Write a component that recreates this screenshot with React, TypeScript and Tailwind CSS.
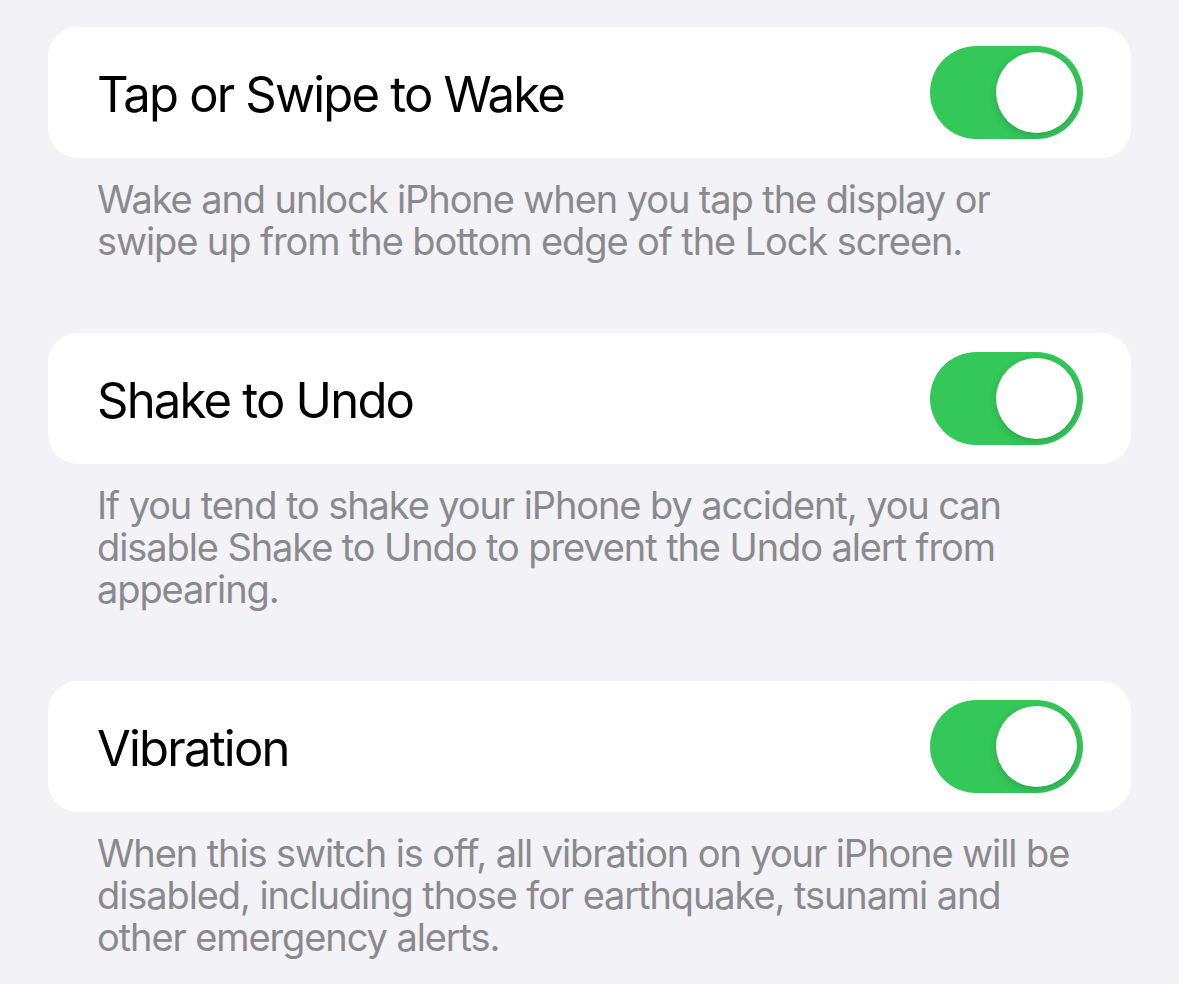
import React from 'react'

const settings = [
  {
    title: 'Tap or Swipe to Wake',
    note: 'Wake and unlock iPhone when you tap the display or swipe up from the bottom edge of the Lock screen.',
  },
  {
    title: 'Shake to Undo',
    note: 'If you tend to shake your iPhone by accident, you can disable Shake to Undo to prevent the Undo alert from appearing.',
  },
  {
    title: 'Vibration',
    note: 'When this switch is off, all vibration on your iPhone will be disabled, including those for earthquake, tsunami and other emergency alerts.',
  },
]

function Toggle() {
  return (
    <div className="w-[153px] h-[93px] rounded-full bg-[#34c759] flex items-center justify-end pr-[6px] shrink-0">
      <div className="w-[81px] h-[81px] rounded-full bg-white shadow-[0_3px_8px_rgba(0,0,0,0.15),0_1px_1px_rgba(0,0,0,0.06)]"></div>
    </div>
  )
}

export default function App() {
  return (
    <div className="min-h-screen bg-[#f2f2f7] pt-[27px] px-[48px] font-['Inter','Liberation_Sans',sans-serif]">
      {settings.map((s, i) => (
        <div key={s.title} className={i > 0 ? 'mt-[71px]' : ''}>
          <div className="h-[131px] bg-white rounded-[30px] flex items-center justify-between pl-[49px] pr-[48px]">
            <span className="pt-[5px] text-[49px] text-black tracking-[-1.8px]">{s.title}</span>
            <Toggle />
          </div>
          <p className="pt-[20px] pl-[49px] pr-[46px] text-[38px] leading-[42px] text-[#8a8a8e] tracking-[-1.1px]">
            {s.note}
          </p>
        </div>
      ))}
    </div>
  )
}
